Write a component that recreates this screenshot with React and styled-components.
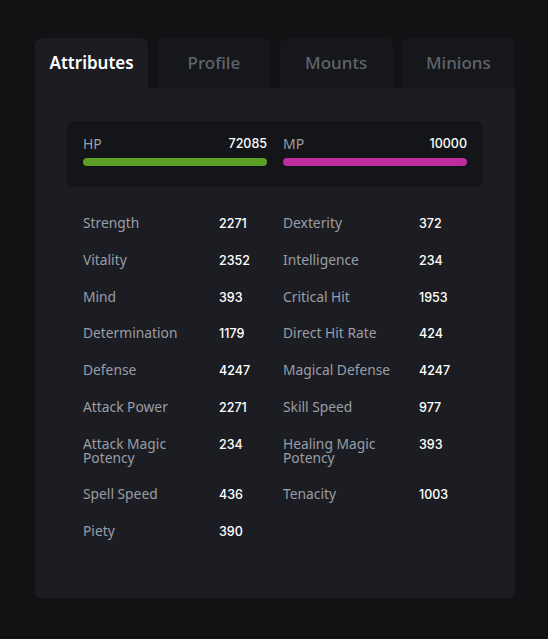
import React, { useState } from "react"
import styled, { createGlobalStyle } from "styled-components"

const GlobalStyle = createGlobalStyle`
  body {
    margin: 0;
    background: #111214;
    font-family: "Noto Sans", "Open Sans", sans-serif;
  }
`

const tabs = ["Attributes", "Profile", "Mounts", "Minions"]

const stats = [
  ["Strength", 2271, "Dexterity", 372],
  ["Vitality", 2352, "Intelligence", 234],
  ["Mind", 393, "Critical Hit", 1953],
  ["Determination", 1179, "Direct Hit Rate", 424],
  ["Defense", 4247, "Magical Defense", 4247],
  ["Attack Power", 2271, "Skill Speed", 977],
  ["Attack Magic Potency", 234, "Healing Magic Potency", 393],
  ["Spell Speed", 436, "Tenacity", 1003],
  ["Piety", 390],
]

function App() {
  const [active, setActive] = useState(0)

  return (
    <>
      <GlobalStyle />
      <Page>
        <Card>
          <TabBar>
            {tabs.map((t, i) => (
              <Tab key={t} $active={i === active} onClick={() => setActive(i)}>
                {t}
              </Tab>
            ))}
          </TabBar>
          <Panel>
            <Resources>
              <Resource>
                <ResourceHead>
                  <ResourceName>HP</ResourceName>
                  <ResourceValue>72085</ResourceValue>
                </ResourceHead>
                <Bar $color="#5b9f25" />
              </Resource>
              <Resource>
                <ResourceHead>
                  <ResourceName>MP</ResourceName>
                  <ResourceValue>10000</ResourceValue>
                </ResourceHead>
                <Bar $color="#bc2c9f" />
              </Resource>
            </Resources>
            <StatGrid>
              {stats.map((row) => (
                <React.Fragment key={row[0]}>
                  <StatName>{row[0]}</StatName>
                  <StatValue>{row[1]}</StatValue>
                  <StatName>{row[2]}</StatName>
                  <StatValue>{row[3]}</StatValue>
                </React.Fragment>
              ))}
            </StatGrid>
          </Panel>
        </Card>
      </Page>
    </>
  )
}

const Page = styled.div`
  padding: 38px 33px 41px 35px;
`

const Card = styled.div`
  width: 480px;
`

const TabBar = styled.div`
  display: flex;
  gap: 9px;
`

const Tab = styled.div`
  flex: 1;
  height: 50px;
  padding-bottom: 2px;
  box-sizing: border-box;
  display: flex;
  align-items: center;
  justify-content: center;
  border-radius: 7px 7px 0 0;
  background: ${(p) => (p.$active ? "#1c1d22" : "#16171a")};
  color: ${(p) => (p.$active ? "#ffffff" : "#5f646c")};
  font-size: 17px;
  font-weight: ${(p) => (p.$active ? 600 : 500)};
  cursor: pointer;
`

const Panel = styled.div`
  height: 510px;
  box-sizing: border-box;
  background: #1c1d22;
  border-radius: 0 0 6px 6px;
  padding: 33px 32px;
`

const Resources = styled.div`
  height: 66px;
  box-sizing: border-box;
  background: #141518;
  border-radius: 8px;
  padding: 14px 16px 0;
  display: grid;
  grid-template-columns: 1fr 1fr;
  column-gap: 16px;
`

const Resource = styled.div`
  display: flex;
  flex-direction: column;
  gap: 7px;
`

const ResourceHead = styled.div`
  display: flex;
  justify-content: space-between;
  align-items: center;
  height: 16px;
`

const ResourceName = styled.span`
  color: #9a9ea6;
  font-size: 14px;
`

const ResourceValue = styled.span`
  color: #ffffff;
  font-family: Inter, "Noto Sans", sans-serif;
  font-size: 12.5px;
  font-weight: 500;
  padding-top: 1px;
`

const Bar = styled.div`
  height: 8px;
  border-radius: 4px;
  background: ${(p) => p.$color};
`

const StatGrid = styled.div`
  margin: 29px 0 0 16px;
  display: grid;
  grid-template-columns: 136px 64px 136px 64px;
  row-gap: 22.75px;
  align-items: start;
`

const StatName = styled.div`
  color: #9a9ea6;
  font-size: 13.8px;
  line-height: 14px;
  padding-right: 6px;
`

const StatValue = styled.div`
  color: #ffffff;
  font-family: Inter, "Noto Sans", sans-serif;
  font-size: 12.5px;
  font-weight: 500;
  line-height: 14px;
  padding-top: 1px;
  margin-bottom: -1px;
`

export default App
